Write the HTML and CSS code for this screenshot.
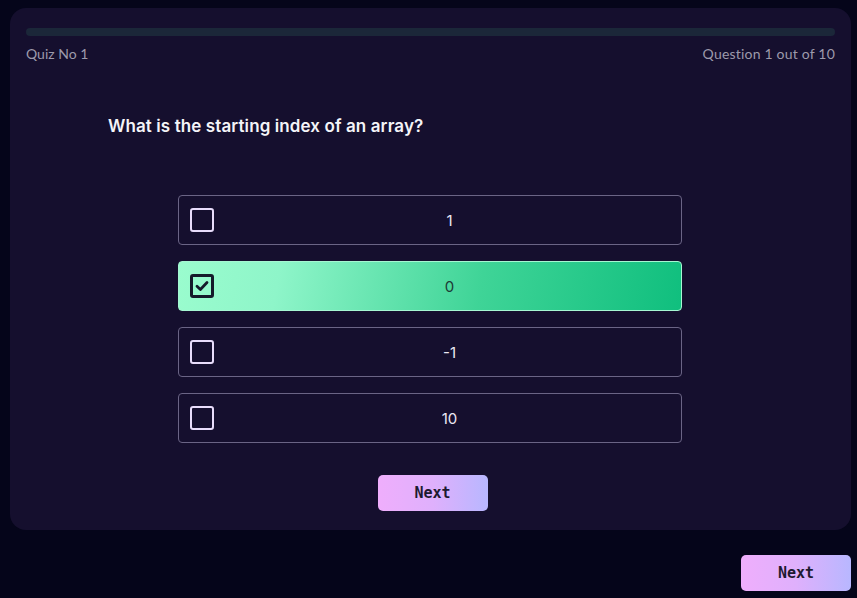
FILE: index.html
```html
<!DOCTYPE html>
<html>
<head>
<meta charset="utf-8">
<link rel="stylesheet" href="styles.css">
</head>
<body>
<div class="page">
  <div class="card">
    <div class="progress"><div class="progress-fill"></div></div>
    <div class="labels">
      <span>Quiz No 1</span>
      <span>Question 1 out of 10</span>
    </div>
    <h2 class="question">What is the starting index of an array?</h2>
    <div class="options">
      <div class="option">
        <span class="box"></span>
        <span class="opt-text">1</span>
      </div>
      <div class="option selected">
        <span class="box">
          <svg width="16" height="16" viewBox="0 0 16 16"><path d="M3 8.2 L6.4 11.4 L13 4.6" fill="none" stroke="#151a2a" stroke-width="2.8" stroke-linecap="round" stroke-linejoin="round"/></svg>
        </span>
        <span class="opt-text">0</span>
      </div>
      <div class="option">
        <span class="box"></span>
        <span class="opt-text">-1</span>
      </div>
      <div class="option">
        <span class="box"></span>
        <span class="opt-text">10</span>
      </div>
    </div>
    <div class="inner-actions">
      <button class="btn">Next</button>
    </div>
  </div>
  <div class="outer-actions">
    <button class="btn">Next</button>
  </div>
</div>
</body>
</html>
```
FILE: styles.css
```css
* { box-sizing: border-box; }
html, body {
  margin: 0;
  padding: 0;
  background: #05051a;
  height: 100%;
}
body {
  font-family: "Inter", "Liberation Sans", sans-serif;
  color: #ffffff;
}
.page {
  padding: 8px 6px 0 10px;
}
.card {
  background: #150f2e;
  border-radius: 16px;
  height: 522px;
  padding: 20px 16px 19px 16px;
  display: flex;
  flex-direction: column;
}
.progress {
  height: 8px;
  border-radius: 4px;
  background: #1b2739;
}
.labels {
  margin-top: 8px;
  display: flex;
  justify-content: space-between;
  font-family: "Lato", "Open Sans", sans-serif;
  font-size: 14px;
  line-height: 20px;
  color: #9d9aab;
}
.labels span:last-child {
  letter-spacing: 0.2px;
}
.question {
  margin: 50px 0 0 82px;
  font-size: 17px;
  line-height: 24px;
  font-weight: 600;
  color: #f4f4f8;
  letter-spacing: 0.1px;
}
.options {
  margin: 57px 0 0 152px;
  width: 504px;
  display: flex;
  flex-direction: column;
  gap: 16px;
}
.option {
  height: 50px;
  border: 1px solid #6a6485;
  border-radius: 4px;
  display: flex;
  align-items: center;
  padding: 0 12px 0 11px;
  gap: 16px;
}
.box {
  width: 24px;
  height: 24px;
  border: 2.5px solid #e8dcfb;
  border-radius: 3px;
  display: flex;
  align-items: center;
  justify-content: center;
  flex: none;
}
.opt-text {
  flex: 1;
  text-align: center;
  font-size: 15px;
  color: #ece8f4;
}
.option.selected {
  border-color: #a6f7d2;
  background: linear-gradient(100deg, #9afcce 0%, #8ef5c9 20%, #3fd497 60%, #10bf7e 100%);
}
.option.selected .box {
  border-color: #151a2a;
  border-width: 3px;
}
.option.selected .opt-text {
  color: #1d3a36;
}
.inner-actions {
  margin-top: 32px;
  display: flex;
  justify-content: center;
  padding-left: 4px;
}
.btn {
  width: 110px;
  height: 36px;
  border: none;
  border-radius: 5px;
  background: linear-gradient(90deg, #efaefc 0%, #dfb0fc 50%, #b8b7ff 100%);
  font-family: "DejaVu Sans Mono", "Liberation Mono", monospace;
  font-weight: bold;
  font-size: 15px;
  color: #1d1a30;
  cursor: pointer;
}
.outer-actions {
  margin-top: 25px;
  display: flex;
  justify-content: flex-end;
}
```
